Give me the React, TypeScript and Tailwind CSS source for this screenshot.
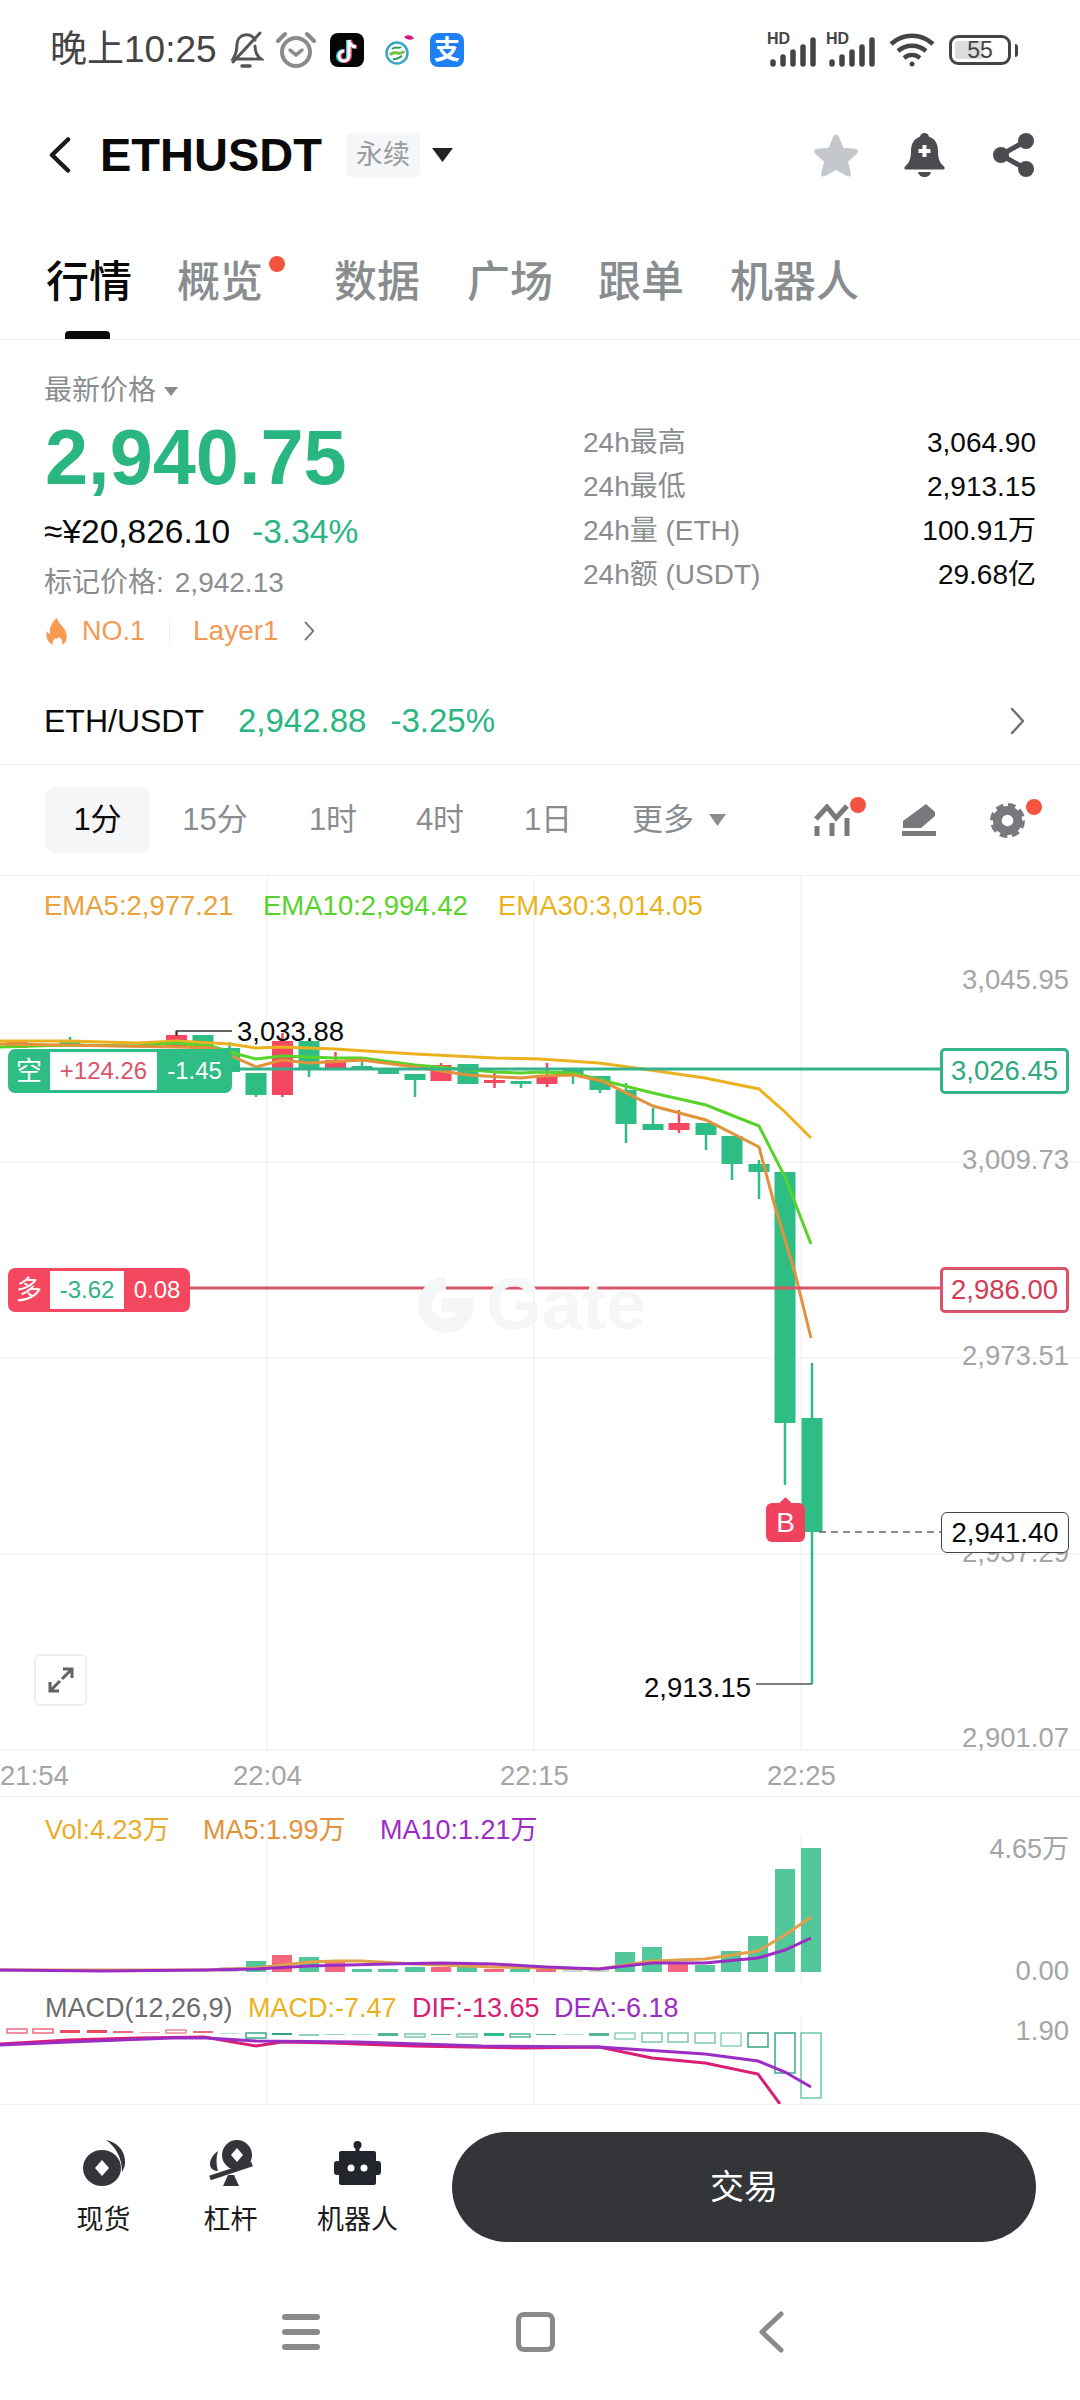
const GREEN = '#2ebd85'
const RED = '#f5475f'

// [centre x, body top, body bottom, wick top, wick bottom, rising]
const candles: [number, number, number, number, number, boolean][] = [
  [17, 1042, 1048, 1042, 1048, true],
  [70, 1042, 1046, 1037, 1046, false],
  [176.5, 1035, 1048, 1031, 1048, true],
  [203, 1035, 1048, 1035, 1048, false],
  [229.5, 1048, 1072, 1042, 1072, false],
  [256, 1073, 1095, 1073, 1097, false],
  [282.5, 1041, 1095, 1033, 1097, true],
  [309, 1041, 1069, 1041, 1077, false],
  [335.5, 1060, 1068, 1052, 1068, true],
  [362, 1066, 1069, 1058, 1069, false],
  [388.5, 1068, 1074, 1068, 1074, false],
  [415, 1074, 1080, 1074, 1097, false],
  [441, 1065, 1081, 1063, 1081, true],
  [468, 1064, 1084, 1064, 1084, false],
  [494.5, 1080, 1083, 1072, 1088, true],
  [521, 1081, 1084, 1081, 1088, false],
  [547, 1075, 1084, 1063, 1087, true],
  [573, 1069, 1075, 1069, 1084, false],
  [600, 1076, 1090, 1076, 1093, false],
  [626, 1090, 1124, 1083, 1143, false],
  [653, 1124, 1130, 1108, 1130, false],
  [679, 1123, 1130, 1110, 1133, true],
  [706, 1123, 1135, 1123, 1150, false],
  [732, 1136, 1164, 1136, 1180, false],
  [759, 1164, 1172, 1160, 1199, false],
  [785, 1172, 1423, 1172, 1485, false],
  [812, 1418, 1532, 1363, 1684, false],
]

const ema30 = '0,1041 69,1041 138,1043 176,1041 230,1044 256,1048 282,1047 335,1049 415,1054 495,1058 540,1059 599,1063 636,1068 705,1078 759,1089 785,1112 811,1138'
const ema10 = '0,1047 69,1045 138,1046 176,1043 214,1047 241,1055 256,1059 282,1056 335,1058 362,1058 415,1065 495,1072 521,1073 540,1072 574,1073 609,1082 653,1093 706,1105 759,1126 785,1177 811,1244'
const ema5 = '0,1044 176,1047 214,1048 234,1057 256,1067 282,1060 309,1063 362,1060 415,1067 468,1075 521,1078 540,1076 574,1075 602,1081 653,1106 706,1120 759,1147 774,1203 795,1273 811,1338'

// [centre x, top, rising, faded]
const volumes: [number, number, boolean, boolean?][] = [
  [229, 1967, true, true],
  [256, 1961, false],
  [282, 1955, true],
  [309, 1957, false],
  [335, 1962, true],
  [362, 1969, false],
  [388, 1969, false],
  [415, 1967, false],
  [441, 1967, true],
  [467, 1967, false],
  [494, 1969, true],
  [520, 1969, false],
  [546, 1969, true],
  [573, 1969, false, true],
  [599, 1969, false, true],
  [625, 1952, false],
  [652, 1947, false],
  [678, 1962, true],
  [705, 1965, false],
  [731, 1951, false],
  [758, 1936, false],
  [785, 1869, false],
  [811, 1848, false],
]

const ma5 = '0,1970 207,1970 256,1968 309,1962 335,1961 362,1961 415,1964 494,1967 599,1969 652,1961 705,1959 758,1951 785,1935 811,1917'
const ma10 = '0,1970 103,1971 207,1970 256,1969 309,1966 388,1964 441,1963 494,1964 546,1967 599,1969 652,1963 705,1963 758,1958 785,1950 811,1938'

// [centre x, top, bottom, colour, hollow]
const macdBars: [number, number, number, string, boolean][] = [
  [17, 2029, 2033, '#ee6a7e', true],
  [43, 2029, 2033, '#ee6a7e', true],
  [70, 2030, 2033, '#ec4c63', false],
  [97, 2030, 2033, '#ec4c63', false],
  [123, 2031, 2033, '#ee6a7e', false],
  [150, 2032, 2033, '#f4a3af', false],
  [176, 2030, 2033, '#ee8796', true],
  [203, 2031, 2033, '#ee6a7e', false],
  [229, 2033, 2034, '#b4e3d0', false],
  [256, 2033, 2038, '#3aa888', true],
  [282, 2033, 2035, '#2fa57f', false],
  [309, 2034, 2036, '#8fd2b8', false],
  [335, 2034, 2035, '#9ad8c0', false],
  [362, 2034, 2035, '#b4e3d0', false],
  [388, 2033, 2036, '#55b596', false],
  [415, 2034, 2037, '#7cc7ad', true],
  [441, 2034, 2035, '#55b596', false],
  [467, 2034, 2037, '#7cc7ad', true],
  [494, 2033, 2036, '#2ebd85', false],
  [520, 2034, 2037, '#55b596', true],
  [546, 2034, 2035, '#55b596', false],
  [573, 2034, 2035, '#b4e3d0', false],
  [599, 2033, 2036, '#55b596', false],
  [625, 2033, 2039, '#8fd2b8', true],
  [652, 2033, 2042, '#7cc7ad', true],
  [678, 2033, 2042, '#7cc7ad', true],
  [705, 2033, 2043, '#7cc7ad', true],
  [731, 2033, 2046, '#8fd2b8', true],
  [758, 2033, 2047, '#3aa888', true],
  [785, 2033, 2073, '#3aa888', true],
  [811, 2033, 2098, '#6cc8ab', true],
]

const dif = '0,2044 69,2040 138,2038 204,2037 256,2046 282,2042 331,2043 413,2046 523,2048 599,2047 652,2058 705,2063 758,2074 780,2104'
const dea = '0,2045 69,2042 172,2038 207,2038 256,2041 358,2042 482,2046 599,2047 705,2054 758,2061 785,2072 811,2087'

function Dot({ className }: { className: string }) {
  return <span className={`absolute w-[16px] h-[16px] rounded-full bg-[#f4533f] ${className}`} />
}

function Chevron({ className, colour, width }: { className: string; colour: string; width: number }) {
  return (
    <svg viewBox="0 0 16 28" className={className} fill="none" stroke={colour} strokeWidth={width} strokeLinecap="round" strokeLinejoin="round">
      <path d="m3 2 11 12L3 26" />
    </svg>
  )
}

function Signal() {
  return (
    <div className="relative w-[50px] h-[33px]">
      <span className="absolute left-0 top-[-3px] text-[16px] leading-[16px] font-bold text-[#444]">HD</span>
      <svg viewBox="0 0 50 33" className="absolute inset-0 w-[50px] h-[33px]">
        <g stroke="#444" strokeWidth="5.500" strokeLinecap="round">
          <path d="M6 30v-2" />
          <path d="M16 30v-7" />
          <path d="M26 30v-12" />
          <path d="M36 30v-17" />
          <path d="M46 30V6" />
        </g>
      </svg>
    </div>
  )
}

function StatusBar() {
  return (
    <div className="h-[100px] flex items-center pl-[50px] pr-[62px] text-[#444]">
      <span className="w-[168px] text-[37px] leading-[40px] whitespace-nowrap">晚上10:25</span>
      <svg viewBox="0 0 36 38" className="w-[36px] h-[38px] ml-[10px]" fill="none" stroke="#555" strokeWidth="3" strokeLinecap="round">
        <path d="M27 9a9.500 9.500 0 0 0-18 4c0 8-2 12-4 15h21" />
        <path d="M27 15c0 6 2 10 6 13h-5" />
        <path d="M32 2 5 31" />
        <path d="M14 35h8" strokeWidth="3.500" />
      </svg>
      <svg viewBox="0 0 40 38" className="w-[40px] h-[38px] ml-[12px]" fill="none" stroke="#8a8a8a" strokeWidth="4" strokeLinecap="round">
        <circle cx="20" cy="21" r="14" />
        <path d="M2 10 9 3" />
        <path d="M38 10 31 3" />
        <path d="m14 19 6 5 6-5" strokeWidth="3.500" />
      </svg>
      <svg viewBox="0 0 34 34" className="w-[34px] h-[34px] ml-[14px]">
        <rect width="34" height="34" rx="8" fill="#050505" />
        <path d="M19 6v16a5 5 0 1 1-5-5M19 6c.5 4 3 6.500 7 7" fill="none" stroke="#25d9e4" strokeWidth="4" transform="translate(-1 1)" />
        <path d="M19 6v16a5 5 0 1 1-5-5M19 6c.5 4 3 6.500 7 7" fill="none" stroke="#f4375f" strokeWidth="4" transform="translate(1 1)" />
        <path d="M19 6v16a5 5 0 1 1-5-5M19 6c.5 4 3 6.500 7 7" fill="none" stroke="#fff" strokeWidth="3" transform="translate(0 1)" />
      </svg>
      <svg viewBox="0 0 32 36" className="w-[32px] h-[36px] ml-[20px]" fill="none">
        <circle cx="13" cy="21" r="10.500" stroke="#3aa6c9" strokeWidth="2.500" />
        <path d="M6 23c4-6 10 2 14-4" stroke="#7cc242" strokeWidth="3" />
        <path d="M8 17c4-3 6 0 9-2M9 27c4 1 7-2 9-3" stroke="#2f9a5d" strokeWidth="2" />
        <path d="M20 5c3-3 8-2 10 1-3 3-7 2-10-1Z" fill="#d6177e" />
      </svg>
      <div className="w-[34px] h-[34px] ml-[14px] rounded-[8px] bg-[#1f80f5] flex items-center justify-center text-white text-[26px] leading-[34px] font-bold">
        支
      </div>
      <div className="ml-auto flex items-center">
        <Signal />
        <div className="ml-[9px]"><Signal /></div>
        <svg viewBox="0 0 48 36" className="w-[48px] h-[36px] ml-[12px]" fill="none" stroke="#444" strokeWidth="4.500">
          <path d="M3 12c12-11 30-11 42 0" />
          <path d="M10 19c8-7 20-7 28 0" />
          <path d="M16 26c5-4 11-4 16 0" />
          <circle cx="24" cy="32" r="2.500" fill="#444" stroke="none" />
        </svg>
        <div className="relative w-[62px] h-[30px] ml-[13px] border-[3px] border-[#444] rounded-[9px] p-[3px]">
          <div className="w-[55%] h-full rounded-[3px] bg-[#dcdcdc]" />
          <span className="absolute inset-0 flex items-center justify-center text-[23px] leading-[24px] text-[#444]">55</span>
        </div>
        <span className="w-[3px] h-[13px] ml-[4px] rounded-r-full bg-[#444]" />
      </div>
    </div>
  )
}

function Header() {
  return (
    <div className="h-[110px] flex items-center pl-[49px] pr-[46px]">
      <svg viewBox="0 0 22 36" className="w-[22px] h-[36px]" fill="none" stroke="#1a1a1a" strokeWidth="4.500" strokeLinecap="round" strokeLinejoin="round">
        <path d="M19 2.500 3 18l16 15.500" />
      </svg>
      <span className="ml-[29px] text-[47px] leading-[50px] font-bold text-[#0a0a0a]">ETHUSDT</span>
      <span className="ml-[24px] w-[74px] h-[44px] rounded-[4px] bg-[#f5f6f7] flex items-center justify-center text-[27px] text-[#999c9f]">永续</span>
      <svg viewBox="0 0 21 14" className="ml-[12px] w-[21px] h-[14px]"><path d="M0 0h21L10.500 14Z" fill="#222" /></svg>
      <svg viewBox="0 0 46 44" className="ml-auto w-[46px] h-[44px]">
        <path d="M23 1.500c1.500 0 2.500 1 3.200 2.800l4.200 10.500 11.300.9c3.500.3 4.500 3 2 5.300l-8.600 7.500 2.700 11.300c.8 3.300-1.700 4.800-4.500 3L23 37l-10.100 5.800c-2.800 1.700-5.300.3-4.500-3l2.700-11.300-8.600-7.500c-2.500-2.300-1.500-5 2-5.300l11.300-.9 4.200-10.500c.7-1.800 1.700-2.800 3-2.800Z" fill="#c4c8cc" />
      </svg>
      <svg viewBox="0 0 41 44" className="ml-[45px] w-[41px] h-[44px]">
        <path d="M20.500 0c2.500 0 4 1.500 4.300 3.500C31 5.500 34 11 34 18c0 7 1.500 12 6 15.500 1 1 1 3-1 3H2c-2 0-2-2-1-3C5.500 30 7 25 7 18c0-7 3-12.500 9.200-14.500C16.500 1.500 18 0 20.500 0Z" fill="#4a4c50" />
        <path d="M14 39h13c-.5 3-3.300 5-6.500 5S14.500 42 14 39Z" fill="#4a4c50" />
        <path d="M20.500 12v12M14.500 18h12" stroke="#fff" strokeWidth="4" />
      </svg>
      <svg viewBox="0 0 41 44" className="ml-[48px] w-[41px] h-[44px]" fill="#4a4c50">
        <path d="M33 8 8 22l25 14" fill="none" stroke="#4a4c50" strokeWidth="5" />
        <circle cx="33" cy="8" r="8" />
        <circle cx="8" cy="22" r="8" />
        <circle cx="33" cy="36" r="8" />
      </svg>
    </div>
  )
}

function Tabs() {
  return (
    <div className="relative h-[130px] flex items-center pl-[46px] pt-[14px] border-b border-[#f0f1f2] text-[43px] leading-[50px] font-medium text-[#8a8d90]">
      <span className="text-[#0a0a0a]">行情</span>
      <span className="relative ml-[45px] mr-[26px]">
        概览
        <Dot className="right-[-22px] top-[-1px]" />
      </span>
      <span className="ml-[45px]">数据</span>
      <span className="ml-[47px]">广场</span>
      <span className="ml-[45px]">跟单</span>
      <span className="ml-[46px]">机器人</span>
      <span className="absolute left-[65px] bottom-0 w-[45px] h-[8px] rounded-t-[4px] bg-[#0a0a0a]" />
    </div>
  )
}

function StatRow({ label, value }: { label: string; value: string }) {
  return (
    <div className="h-[44px] flex items-center justify-between text-[28px]">
      <span className="text-[#8a8d90]">{label}</span>
      <span className="text-[#0a0a0a]">{value}</span>
    </div>
  )
}

function PriceSection() {
  return (
    <div className="h-[340px] flex px-[44px]">
      <div className="w-[539px] pt-[33px]">
        <div className="h-[36px] flex items-center text-[28px] text-[#8a8d90]">
          最新价格
          <svg viewBox="0 0 14 9" className="ml-[8px] w-[14px] h-[9px]"><path d="M0 0h14L7 9Z" fill="#8a8d90" /></svg>
        </div>
        <div className="mt-[10px] ml-[1px] h-[76px] text-[77.500px] leading-[76px] font-bold text-[#29b680]">2,940.75</div>
        <div className="mt-[17px] h-[40px] flex items-center text-[33.500px]">
          <span className="text-[#0a0a0a]">≈¥20,826.10</span>
          <span className="ml-[22px] text-[#29b680]">-3.34%</span>
        </div>
        <div className="mt-[13px] h-[36px] flex items-center text-[28px] text-[#8a8d90]">
          标记价格:
          <span className="ml-[11px]">2,942.13</span>
        </div>
        <div className="mt-[12px] h-[36px] flex items-center text-[28px] text-[#f29a55]">
          <svg viewBox="0 0 22 27" className="ml-[2px] w-[22px] h-[27px]">
            <path d="M11 0c1 5 5 7 8 12 3 6 2 13-3 15 1-3 0-6-3-8-1 2-2 2-3 1-3 2-4 4-3 7C2 25-1 19 1 13c1 2 2 3 3 3C3 10 6 4 11 0Z" fill="#f79a52" />
          </svg>
          <span className="ml-[14px] text-[27px]">NO.1</span>
          <span className="ml-[24px] w-px h-[26px] bg-[#eeeeee]" />
          <span className="ml-[23px]">Layer1</span>
          <Chevron className="ml-[24px] w-[12px] h-[20px]" colour="#77797c" width={2.600} />
        </div>
      </div>
      <div className="flex-1 pt-[81px]">
        <StatRow label="24h最高" value="3,064.90" />
        <StatRow label="24h最低" value="2,913.15" />
        <StatRow label="24h量 (ETH)" value="100.91万" />
        <StatRow label="24h额 (USDT)" value="29.68亿" />
      </div>
    </div>
  )
}

function SpotRow() {
  return (
    <div className="h-[85px] flex items-center pl-[44px] pr-[55px] pb-[2px] border-b border-[#f0f1f2] text-[33px]">
      <span className="text-[32px] text-[#0a0a0a]">ETH/USDT</span>
      <span className="ml-[34px] text-[#29b680]">2,942.88</span>
      <span className="ml-[24px] text-[#29b680]">-3.25%</span>
      <Chevron className="ml-auto w-[16px] h-[28px]" colour="#6d6f72" width={2.400} />
    </div>
  )
}

function IntervalBar() {
  const cell = 'flex items-center justify-center h-[66px]'
  return (
    <div className="h-[111px] flex items-center pl-[45px] border-b border-[#f0f1f2] text-[31px] text-[#8a8d90]">
      <span className={`${cell} w-[105px] rounded-[10px] bg-[#f5f6f7] text-[#0a0a0a]`}>1分</span>
      <span className={`${cell} w-[130px]`}>15分</span>
      <span className={`${cell} w-[106px]`}>1时</span>
      <span className={`${cell} w-[108px]`}>4时</span>
      <span className={`${cell} w-[108px]`}>1日</span>
      <span className="ml-[30px] flex items-center">
        更多
        <svg viewBox="0 0 17 12" className="ml-[15px] w-[17px] h-[12px]"><path d="M0 0h17L8.500 12Z" fill="#8a8d90" /></svg>
      </span>
      <div className="relative ml-[88px] w-[36px] h-[32px]">
        <svg viewBox="0 0 36 32" className="w-[36px] h-[32px]" fill="none" stroke="#77797c" strokeWidth="5">
          <path d="M2 15 13 3l9 11L33 2" />
          <path d="M3 22v10M18 19v13M33 14v18" />
        </svg>
        <Dot className="left-[36px] top-[-7px]" />
      </div>
      <svg viewBox="0 0 34 32" className="ml-[52px] w-[34px] h-[32px]" fill="#77797c">
        <path d="M24 0 33 8 33 12 19 24H1v-7Z" />
        <path d="M0 27h34v5H0Z" />
      </svg>
      <div className="relative ml-[54px] w-[35px] h-[35px]">
        <svg viewBox="0 0 36 36" className="w-[35px] h-[35px]" fill="none">
          <circle cx="18" cy="18" r="10.500" stroke="#77797c" strokeWidth="9" />
          <circle cx="18" cy="18" r="15.500" stroke="#77797c" strokeWidth="5" strokeDasharray="7.500 4.670" />
        </svg>
        <Dot className="left-[36px] top-[-4px]" />
      </div>
    </div>
  )
}

function CandleChart() {
  const axis = 'absolute right-[11px] text-[27.500px] leading-[36px] text-[#a3a5a7]'
  const time = 'absolute top-[882px] text-[27.500px] leading-[36px] text-[#a3a5a7]'
  return (
    <div className="relative h-[921px] overflow-hidden border-b border-[#f0f1f2]">
      <svg viewBox="0 876 1080 920" className="absolute inset-0 w-[1080px] h-[920px]">
        <g stroke="#f3f4f5" strokeWidth="1.500">
          <path d="M267 876v874M534 876v874M801 876v874" />
          <path d="M0 1162h1080M0 1358h1080M0 1554h1080M0 1750h1080" />
        </g>
        {candles.map(([x, top, bottom, wickTop, wickBottom, rising]) => (
          <g key={x} fill={rising ? RED : GREEN}>
            <rect x={x - 1.25} y={wickTop} width="2.500" height={wickBottom - wickTop} />
            <rect x={x - 10.5} y={top} width="21" height={bottom - top} />
          </g>
        ))}
        <polyline points={ema30} fill="none" stroke="#eab21e" strokeWidth="3" />
        <polyline points={ema10} fill="none" stroke="#57d32a" strokeWidth="3" />
        <polyline points={ema5} fill="none" stroke="#e2923a" strokeWidth="3" />
        <path d="M232 1069h708" stroke="#33b28b" strokeWidth="3" />
        <path d="M190 1288h750" stroke="#d95468" strokeWidth="3" />
        <path d="M176.500 1036v-5H232" fill="none" stroke="#333" strokeWidth="1.500" />
        <path d="M756 1684h56" fill="none" stroke="#555" strokeWidth="1.500" />
        <path d="M819 1532h122" fill="none" stroke="#666" strokeWidth="1.500" strokeDasharray="7 5" />
        {/* Gate watermark mark */}
        <path d="M446 1284a21 21 0 1 0 21 21h-19v-7" fill="none" stroke="#f5f6f7" strokeWidth="14" />
      </svg>

      <div className="relative flex items-center h-[60px] pl-[44px] text-[27.500px] leading-[60px]">
        <span className="text-[#e9a23b]">EMA5:2,977.21</span>
        <span className="absolute left-[263px] text-[#57d32a]">EMA10:2,994.42</span>
        <span className="absolute left-[498px] text-[#eab21e]">EMA30:3,014.05</span>
      </div>

      <span className={`${axis} top-[86px]`}>3,045.95</span>
      <span className={`${axis} top-[266px]`}>3,009.73</span>
      <span className={`${axis} top-[462px]`}>2,973.51</span>
      <span className={`${axis} top-[659px]`}>2,937.29</span>
      <span className={`${axis} top-[844px]`}>2,901.07</span>

      <span className="absolute left-[486px] top-[392px] text-[72px] leading-[72px] font-bold text-[#f5f6f7]">Gate</span>

      <span className={`${time} left-0`}>21:54</span>
      <span className={`${time} left-[233px]`}>22:04</span>
      <span className={`${time} left-[500px]`}>22:15</span>
      <span className={`${time} left-[767px]`}>22:25</span>

      <span className="absolute left-[237px] top-[138px] text-[27.500px] leading-[36px] text-[#0a0a0a]">3,033.88</span>

      <div className="absolute left-[8px] top-[173px] w-[224px] h-[44px] flex items-center rounded-[7px] bg-[#2ebd85] text-white">
        <span className="w-[42px] text-center text-[26px]">空</span>
        <span className="w-[107px] h-[38px] flex items-center justify-center bg-white text-[24px] text-[#d95468]">+124.26</span>
        <span className="flex-1 text-center text-[24px]">-1.45</span>
      </div>
      <div className="absolute left-[8px] top-[392px] w-[182px] h-[44px] flex items-center rounded-[7px] bg-[#f5475f] text-white">
        <span className="w-[42px] text-center text-[26px]">多</span>
        <span className="w-[74px] h-[38px] flex items-center justify-center bg-white text-[24px] text-[#33b28b]">-3.62</span>
        <span className="flex-1 text-center text-[24px]">0.08</span>
      </div>

      <div className="absolute left-[940px] top-[172px] w-[129px] h-[46px] flex items-center justify-center rounded-[5px] border-[3px] border-[#33b28b] bg-white text-[27.500px] text-[#2fa880]">3,026.45</div>
      <div className="absolute left-[940px] top-[391px] w-[129px] h-[46px] flex items-center justify-center rounded-[5px] border-[3px] border-[#d95468] bg-white text-[27.500px] text-[#d13d58]">2,986.00</div>
      <div className="absolute left-[941px] top-[636px] w-[128px] h-[41px] flex items-center justify-center rounded-[6px] border-[1.500px] border-[#444] bg-white text-[27.500px] text-[#0a0a0a]">2,941.40</div>

      <div className="absolute left-[766px] top-[627px] w-[39px] h-[39px] flex items-center justify-center rounded-[6px] bg-[#f0425f] text-[28px] text-white">
        <span className="absolute top-[-4px] left-[15px] w-[9px] h-[9px] rotate-45 rounded-[1px] bg-[#f0425f]" />
        B
      </div>

      <span className="absolute left-[644px] top-[794px] text-[27.500px] leading-[36px] text-[#0a0a0a]">2,913.15</span>

      <div className="absolute left-[34px] top-[778px] w-[53px] h-[52px] flex items-center justify-center rounded-[6px] border-2 border-[#eeeff0] bg-white">
        <svg viewBox="0 0 28 28" className="w-[28px] h-[28px]" fill="none" stroke="#5f6266" strokeWidth="3">
          <path d="M16 3h9v9M25 3 15 13" />
          <path d="M12 25H3v-9M3 25l10-10" />
        </svg>
      </div>
    </div>
  )
}

function VolumePanel() {
  return (
    <div className="relative h-[189px]">
      <svg viewBox="0 1797 1080 189" className="absolute inset-0 w-[1080px] h-[189px]">
        <path d="M267 1835v150M534 1835v150M801 1835v150" stroke="#f3f4f5" strokeWidth="1.500" />
        {volumes.map(([x, top, rising, faded]) => (
          <rect
            key={x}
            x={x - 10}
            y={top}
            width="20"
            height={1972 - top}
            fill={faded ? '#c9d9cf' : rising ? '#f6667f' : '#52c79a'}
          />
        ))}
        <polyline points={ma5} fill="none" stroke="#e2a04a" strokeWidth="3" />
        <polyline points={ma10} fill="none" stroke="#9c2dc4" strokeWidth="3" />
      </svg>
      <div className="relative flex items-center h-[66px] pl-[45px] text-[27px]">
        <span className="text-[#e9ac2f]">Vol:4.23万</span>
        <span className="absolute left-[203px] text-[#e2923a]">MA5:1.99万</span>
        <span className="absolute left-[380px] text-[#9c2dc4]">MA10:1.21万</span>
      </div>
      <span className="absolute right-[11px] top-[34px] text-[27px] leading-[36px] text-[#a3a5a7]">4.65万</span>
      <span className="absolute right-[11px] top-[156px] text-[27.500px] leading-[36px] text-[#a3a5a7]">0.00</span>
    </div>
  )
}

function MacdPanel() {
  return (
    <div className="relative h-[119px] overflow-hidden border-b border-[#f0f1f2]">
      <svg viewBox="0 1986 1080 119" className="absolute inset-0 w-[1080px] h-[119px]">
        <path d="M267 2016v88M534 2016v88M801 2016v88" stroke="#f3f4f5" strokeWidth="1.500" />
        {macdBars.map(([x, top, bottom, colour, hollow]) => (
          <rect
            key={x}
            x={x - 10}
            y={top}
            width="20"
            height={bottom - top}
            fill={hollow ? 'none' : colour}
            stroke={hollow ? colour : 'none'}
            strokeWidth="1.500"
          />
        ))}
        <polyline points={dif} fill="none" stroke="#d91e75" strokeWidth="3" />
        <polyline points={dea} fill="none" stroke="#9c2dc4" strokeWidth="3" />
      </svg>
      <div className="relative flex items-center h-[44px] pl-[45px] text-[27px]">
        <span className="text-[#6a6c6f]">MACD(12,26,9)</span>
        <span className="absolute left-[248px] text-[#eab21e]">MACD:-7.47</span>
        <span className="absolute left-[412px] text-[#d91e75]">DIF:-13.65</span>
        <span className="absolute left-[554px] text-[#9c2dc4]">DEA:-6.18</span>
      </div>
      <span className="absolute right-[11px] top-[27px] text-[27.500px] leading-[36px] text-[#a3a5a7]">1.90</span>
    </div>
  )
}

function ActionItem({ label, children }: { label: string; children: React.ReactNode }) {
  return (
    <div className="w-[127px] flex flex-col items-center">
      <div className="h-[46px] flex items-center justify-center">{children}</div>
      <span className="mt-[17px] text-[27px] leading-[34px] text-[#1a1a1a]">{label}</span>
    </div>
  )
}

function ActionBar() {
  return (
    <div className="h-[165px] flex items-start pl-[40px] pr-[44px]">
      <div className="flex pt-[35px]">
        <ActionItem label="现货">
          <svg viewBox="0 0 44 46" className="w-[44px] h-[46px]">
            <path d="M24 0c10 2 18 9 19 20 .5 5-1 9-3 12 0-14-6-25-16-32Z" fill="#33353a" />
            <ellipse cx="20" cy="28" rx="19" ry="18" fill="#33353a" />
            <path d="m20 20 7 8-7 8-7-8Z" fill="#fff" />
          </svg>
        </ActionItem>
        <ActionItem label="杠杆">
          <svg viewBox="0 0 44 46" className="w-[44px] h-[46px]">
            <circle cx="28" cy="15" r="15" fill="#33353a" />
            <path d="m28 8 6 7-6 7-6-7Z" fill="#fff" />
            <path d="M9 11c-3 2-8 7-8 13 0 4 3 7 8 7-2-6-2-14 0-20Z" fill="#33353a" />
            <path d="m1 38 42-14" stroke="#33353a" strokeWidth="5" />
            <path d="M14 46h16l-5-11h-6Z" fill="#33353a" />
          </svg>
        </ActionItem>
        <ActionItem label="机器人">
          <svg viewBox="0 0 47 44" className="w-[47px] h-[44px]" fill="#22252c">
            <circle cx="23.500" cy="4" r="4" />
            <path d="M21.500 6h4v6h-4z" />
            <rect x="5" y="10" width="37" height="34" rx="2" />
            <rect y="20" width="47" height="14" rx="3" />
            <circle cx="17" cy="27" r="3.500" fill="#fff" />
            <circle cx="30" cy="27" r="3.500" fill="#fff" />
          </svg>
        </ActionItem>
      </div>
      <button className="ml-auto mt-[27px] w-[584px] h-[110px] rounded-full bg-[#333538] text-[34px] text-white">交易</button>
    </div>
  )
}

function NavBar() {
  return (
    <div className="relative h-[130px]">
      <div className="absolute left-[282px] top-[44px] w-[38px] h-[36px] flex flex-col justify-between">
        <span className="h-[6px] rounded-full bg-[#8a8a8a]" />
        <span className="h-[6px] rounded-full bg-[#8a8a8a]" />
        <span className="h-[6px] rounded-full bg-[#8a8a8a]" />
      </div>
      <div className="absolute left-[516px] top-[42px] w-[39px] h-[40px] rounded-[8px] border-[5px] border-[#8a8a8a]" />
      <svg viewBox="0 0 26 42" className="absolute left-[758px] top-[41px] w-[26px] h-[42px]" fill="none" stroke="#8a8a8a" strokeWidth="5" strokeLinecap="round" strokeLinejoin="round">
        <path d="M23 3 4 21l19 18" />
      </svg>
    </div>
  )
}

export default function App() {
  return (
    <div className="w-[1080px] h-[2400px] overflow-hidden flex flex-col bg-white font-['Liberation_Sans','Noto_Sans_CJK_SC',sans-serif]">
      <StatusBar />
      <Header />
      <Tabs />
      <PriceSection />
      <SpotRow />
      <IntervalBar />
      <CandleChart />
      <VolumePanel />
      <MacdPanel />
      <ActionBar />
      <NavBar />
    </div>
  )
}
